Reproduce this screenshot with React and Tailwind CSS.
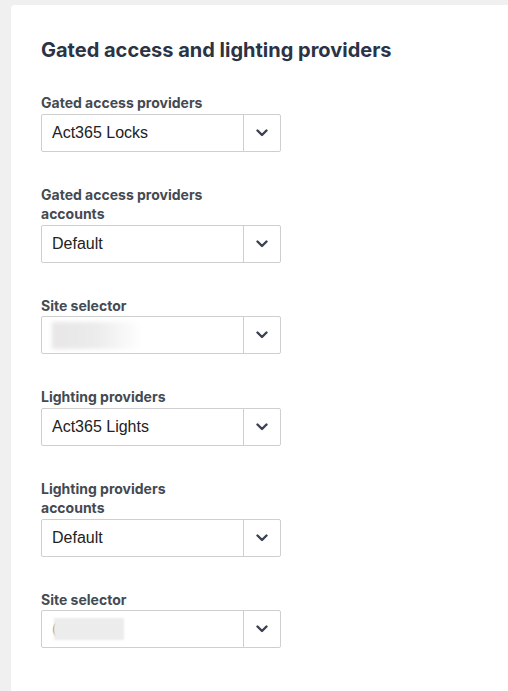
import React from 'react';

const fields = [
  { label: 'Gated access providers', value: 'Act365 Locks' },
  { label: 'Gated access providers accounts', value: 'Default' },
  { label: 'Site selector', blur: 'a' },
  { label: 'Lighting providers', value: 'Act365 Lights' },
  { label: 'Lighting providers accounts', value: 'Default' },
  { label: 'Site selector', blur: 'b' },
];

function Chevron() {
  return (
    <svg width="12" height="8" viewBox="0 0 12 8" fill="none">
      <path d="M1.5 1.5 L6 6 L10.5 1.5" stroke="#3b4250" strokeWidth="2.4" strokeLinecap="round" strokeLinejoin="round" />
    </svg>
  );
}

function Select({ value, blur }) {
  return (
    <div className="flex h-[38px] w-[240px] rounded-[2px] border border-[#cfcfcf] bg-white">
      <div className="relative flex flex-1 items-center overflow-hidden pl-[10px] text-[16px] text-[#222] font-['Liberation_Sans',Arial,sans-serif]">
        {value}
        {blur === 'a' && (
          <div className="h-[27px] w-[90px] bg-gradient-to-r from-[#e8e6e6] via-[#ececec] to-white blur-[2px]" />
        )}
        {blur === 'b' && (
          <div className="flex items-center">
            <span className="text-[#b08a60]">(</span>
            <div className="ml-[-3px] h-[22px] w-[70px] bg-[#ececec] blur-[1px]" />
          </div>
        )}
      </div>
      <div className="flex w-[37px] items-center justify-center border-l border-[#cfcfcf]">
        <Chevron />
      </div>
    </div>
  );
}

export default function App() {
  return (
    <div className="min-h-[691px] bg-[#f0f0f0] pl-[11px] pt-[5px] font-['Inter',sans-serif]">
      <div className="min-h-[686px] rounded-tl-[4px] bg-white pl-[30px] pt-[31px]">
        <h2 className="text-[20px] font-bold leading-[28px] text-[#2b3344]">
          Gated access and lighting providers
        </h2>
        <div className="mt-[29px] flex flex-col gap-[33px]">
          {fields.map((f, i) => (
            <div key={i} className="w-[240px]">
              <label className="mb-px block w-[185px] text-[14px] font-bold leading-[19.5px] text-[#444a52]">
                {f.label}
              </label>
              <Select value={f.value} blur={f.blur} />
            </div>
          ))}
        </div>
      </div>
    </div>
  );
}
